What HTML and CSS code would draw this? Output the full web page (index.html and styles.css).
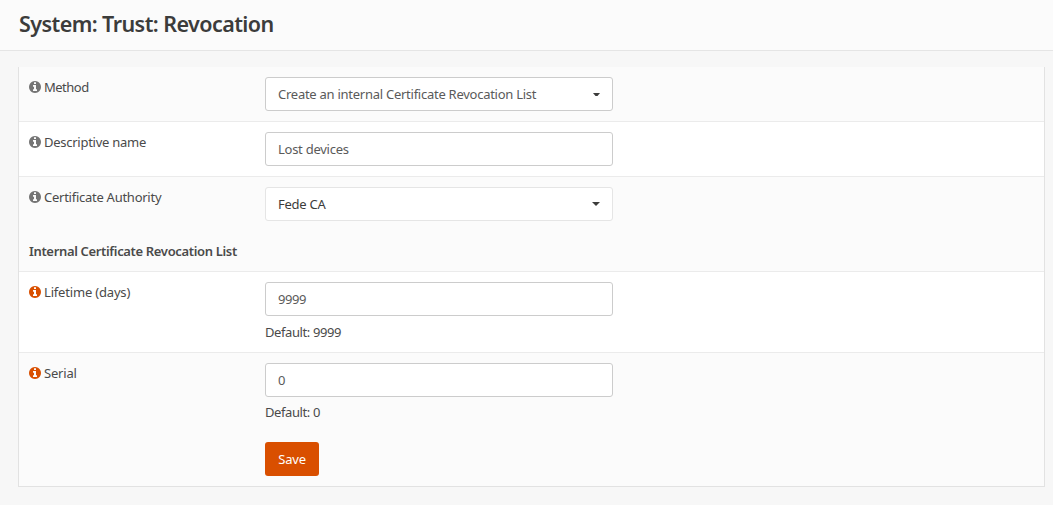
FILE: index.html
```html
<!DOCTYPE html>
<html lang="en">
<head>
<meta charset="utf-8">
<title>System: Trust: Revocation</title>
<link rel="stylesheet" href="styles.css">
</head>
<body>
<svg width="0" height="0" class="defs"><symbol id="info" viewBox="0 0 1536 1536"><path d="M1024 1248v-160q0-14-9-23t-23-9h-96V544q0-14-9-23t-23-9H544q-14 0-23 9t-9 23v160q0 14 9 23t23 9h96v320h-96q-14 0-23 9t-9 23v160q0 14 9 23t23 9h448q14 0 23-9t9-23zM896 352V192q0-14-9-23t-23-9H672q-14 0-23 9t-9 23v160q0 14 9 23t23 9h192q14 0 23-9t9-23zM1536 768q0 209-103 385.500T1153.500 1433 768 1536t-385.500-103T103 1153.500 0 768t103-385.500T382.500 103 768 0t385.500 103T1433 382.500 1536 768z"/></symbol></svg>
<header class="page-head"><h1>System: Trust: Revocation</h1></header>
<main class="panel">
  <div class="row alt"><div class="label"><svg class="icon"><use href="#info"/></svg><span class="tight">Method</span></div>
    <div class="field"><div class="control"><span>Create an internal Certificate Revocation List</span><svg class="caret" width="7" height="3" viewBox="0 0 7 3"><path d="M0 0h7L4.500 3h-2z"/></svg></div></div></div>
  <div class="row"><div class="label"><svg class="icon"><use href="#info"/></svg><span>Descriptive name</span></div>
    <div class="field"><div class="control"><span>Lost devices</span></div></div></div>
  <div class="row alt joined"><div class="label"><svg class="icon"><use href="#info"/></svg><span>Certificate Authority</span></div>
    <div class="field"><div class="control light"><span>Fede CA</span><svg class="caret" width="8" height="4" viewBox="0 0 8 4"><path d="M0 0h8L4 4z"/></svg></div></div></div>
  <div class="section">Internal Certificate Revocation List</div>
  <div class="row"><div class="label"><svg class="icon active"><use href="#info"/></svg><span class="loose">Lifetime (days)</span></div>
    <div class="field"><div class="control"><span class="digits">9999</span></div><div class="hint">Default: 9999</div></div></div>
  <div class="row alt last"><div class="label"><svg class="icon active"><use href="#info"/></svg><span class="loose">Serial</span></div>
    <div class="field"><div class="control"><span class="digits">0</span></div><div class="hint">Default: 0</div><button class="save">Save</button></div></div>
</main>
</body>
</html>
```
FILE: styles.css
```css
* { box-sizing: border-box; }
body { margin: 0; height: 505px; background: #f7f7f7; color: #4a4a4a; font: 13px/20px "Source Sans Pro", "Noto Sans", sans-serif; letter-spacing: -0.26px; overflow: hidden; }
.defs { display: block; }
.page-head { height: 51px; padding: 10px 19px; background: #fbfbfb; border-bottom: 1px solid #e5e5e5; }
h1 { margin: 0; font-size: 21.5px; line-height: 28px; font-weight: 600; letter-spacing: -0.57px; color: #3c3c3b; }
.panel { margin: 16px 8px 0 18px; border: 1px solid #e2e2e2; border-top: 0; background: #fff; }
.row { display: flex; padding: 10px; border-bottom: 1px solid #ebebeb; }
.alt { background: #fbfbfb; }
.joined, .last { border-bottom: 0; }
.section { padding: 10px; background: #fbfbfb; border-bottom: 1px solid #ebebeb; font-weight: 600; letter-spacing: -0.34px; }
.label { width: 236px; display: flex; align-items: center; height: 20px; gap: 3px; }
.tight { letter-spacing: -0.5px; }
.loose { letter-spacing: -0.18px; }
.icon { width: 12px; height: 12px; fill: #757575; }
.icon.active { fill: #d94f00; }
.control { width: 348px; height: 34px; padding: 0 12px; border: 1px solid #ccc; border-radius: 3px; background: #fff; display: flex; align-items: center; justify-content: space-between; color: #5a5a5a; }
.light { border-color: #e5e5e5; color: #3c3c3b; }
.light .caret { margin-top: -1px; }
.caret { fill: #3c3c3b; }
.digits { letter-spacing: -0.4px; }
.hint { margin-top: 6px; letter-spacing: -0.4px; }
.last .hint { margin-top: 5px; }
.save { display: block; width: 54px; height: 34px; margin-top: 20px; padding: 0; border: 0; border-radius: 3px; background: #d94f00; color: #fff; font: inherit; letter-spacing: -0.2px; }
```
